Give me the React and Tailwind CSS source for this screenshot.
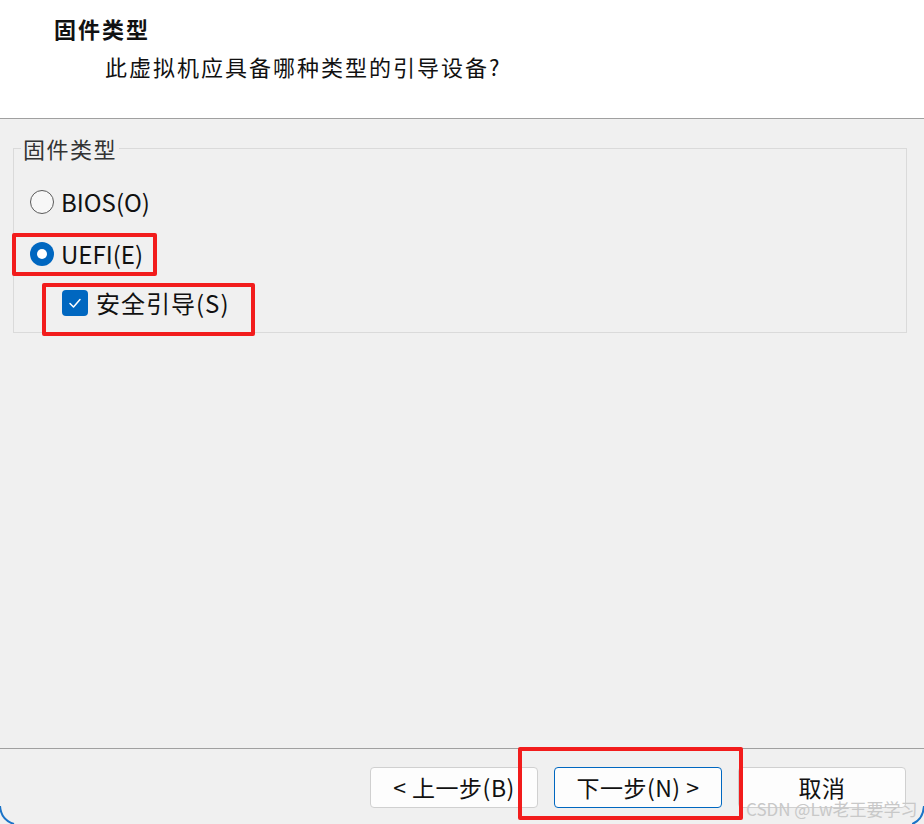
import React from "react";

const Radio = ({ checked, label }) => (
  <div className="flex items-center h-[40px]">
    {checked ? (
      <span className="w-[24px] h-[24px] rounded-full bg-[#0067c0] flex items-center justify-center">
        <span className="w-[10px] h-[10px] rounded-full bg-white" />
      </span>
    ) : (
      <span className="w-[24px] h-[24px] rounded-full border border-[#5a5a5a] bg-[#f7f7f7]" />
    )}
    <span className="ml-[7px] text-[24px] leading-none text-[#111]">{label}</span>
  </div>
);

const Button = ({ children, primary }) => (
  <button
    className={
      primary
        ? "w-[168px] h-[41px] rounded-[4px] border border-[#0067c0] bg-[#fdfdfd] text-[23px] tracking-[0.5px] text-[#111]"
        : "w-[168px] h-[41px] rounded-[4px] border border-[#d0d0d0] bg-[#fdfdfd] text-[23px] tracking-[0.5px] text-[#111]"
    }
  >
    {children}
  </button>
);

export default function App() {
  return (
    <div
      className="relative w-[924px] h-[824px] overflow-hidden bg-[#f0f0f0] flex flex-col"
      style={{ fontFamily: '"Noto Sans CJK SC", "Microsoft YaHei", sans-serif' }}
    >
      {/* header */}
      <div className="h-[119px] bg-white border-b border-[#a0a0a0] shrink-0">
        <div className="pl-[54px] pt-[13px] text-[22px] font-bold leading-[30px] tracking-[2px] text-[#111]">
          固件类型
        </div>
        <div className="pl-[105px] pt-[8px] text-[22px] leading-[30px] tracking-[2px] text-[#111]">
          此虚拟机应具备哪种类型的引导设备?
        </div>
      </div>

      {/* body */}
      <div className="h-[630px] shrink-0 border-b border-[#a0a0a0] pl-[13px] pt-[16px]">
        <fieldset className="w-[894px] h-[198px] border border-[#dadada] pl-[16px] pt-[21px]">
          <legend className="-ml-[9px] px-[2px] text-[22px] leading-[26px] tracking-[1.5px] text-[#333]">
            固件类型
          </legend>
          <Radio label="BIOS(O)" />
          <div className="mt-[12px]">
            <Radio checked label="UEFI(E)" />
          </div>
          <div className="flex items-center h-[40px] mt-[9px] pl-[32px]">
            <span className="w-[26px] h-[26px] rounded-[4px] bg-[#0067c0] flex items-center justify-center">
              <svg width="14" height="14" viewBox="0 0 14 14" fill="none">
                <path d="M2 7.5 L5.5 11 L12 3.5" stroke="white" strokeWidth="1.5" strokeLinecap="round" strokeLinejoin="round" />
              </svg>
            </span>
            <span className="ml-[8px] text-[24px] leading-none tracking-[1px] text-[#111]">安全引导(S)</span>
          </div>
        </fieldset>
      </div>

      {/* footer */}
      <div className="flex-1 flex justify-end gap-[16px] pt-[18px] pr-[18px]">
        <Button>&lt; 上一步(B)</Button>
        <Button primary>下一步(N) &gt;</Button>
        <Button>取消</Button>
      </div>

      {/* annotation boxes */}
      <div className="absolute left-[12px] top-[233px] w-[145px] h-[43px] border-4 border-[#f21c1c] rounded-[2px]" />
      <div className="absolute left-[42px] top-[283px] w-[213px] h-[53px] border-4 border-[#f21c1c] rounded-[2px]" />
      <div className="absolute left-[518px] top-[747px] w-[225px] h-[73px] border-4 border-[#f21c1c] rounded-[2px]" />

      {/* watermark */}
      <div className="absolute left-[746px] top-[797px] text-[17px] leading-[24px] text-[#c8c8c8] whitespace-nowrap">
        CSDN @Lw老王要学习
      </div>

      {/* window corners */}
      <svg className="absolute left-0 top-[806px]" width="16" height="18" viewBox="0 0 16 18">
        <path d="M0 0 Q1 14 14 18" stroke="#1a73c8" strokeWidth="2" fill="none" />
      </svg>
      <svg className="absolute right-0 top-[806px]" width="12" height="18" viewBox="0 0 12 18">
        <path d="M12 0 Q11 14 0 18" stroke="#1a73c8" strokeWidth="2" fill="none" />
      </svg>
    </div>
  );
}
